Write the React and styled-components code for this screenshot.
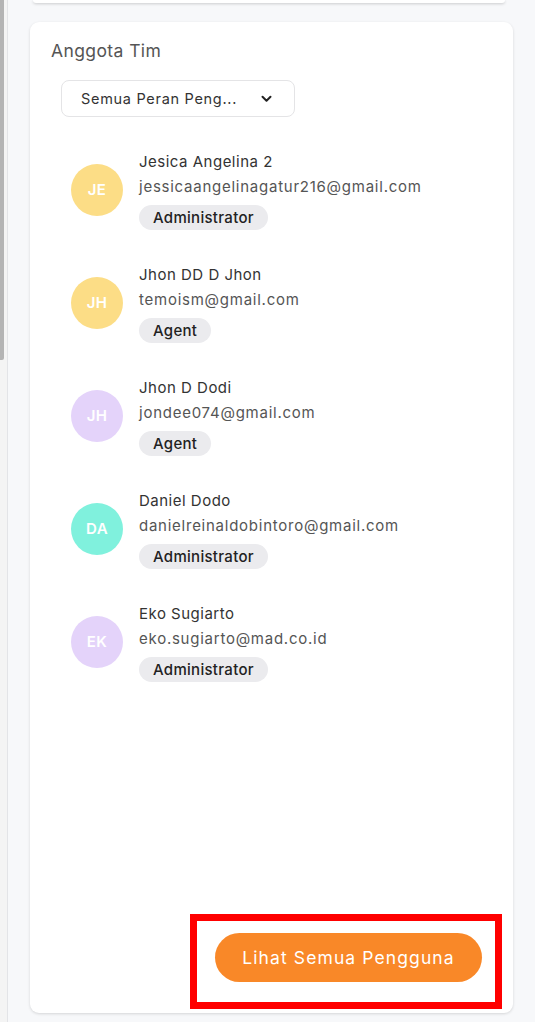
import React from "react";
import styled, { createGlobalStyle } from "styled-components";

const GlobalStyle = createGlobalStyle`
  html, body {
    margin: 0;
    padding: 0;
    background: #f7f8fa;
    font-family: "Inter", "Noto Sans", sans-serif;
  }
`;

const Page = styled.div`
  display: flex;
  height: 1022px;
  overflow: hidden;
`;

// left strip with scrollbar thumb and divider
const Gutter = styled.div`
  width: 7px;
  flex-shrink: 0;
  background: #f4f4f4;
  border-right: 1px solid #e3e4e7;
  display: flex;
  flex-direction: column;
`;

const Thumb = styled.div`
  width: 4px;
  height: 360px;
  background: #b4b4b4;
  border-radius: 0 0 2px 0;
`;

const Column = styled.div`
  flex: 1;
  display: flex;
  flex-direction: column;
  padding: 0 22px 0 22px;
  gap: 19px;
`;

const TopCard = styled.div`
  height: 3px;
  margin: 0 8px 0 3px;
  background: #fff;
  border-radius: 0 0 8px 8px;
  box-shadow: 0 1px 3px rgba(0, 0, 0, 0.18);
`;

const Card = styled.div`
  position: relative;
  height: 991px;
  box-sizing: border-box;
  background: #fff;
  border-radius: 9px;
  box-shadow: 0 1px 3px rgba(0, 0, 0, 0.14);
  padding: 18px 31px 31px 21px;
  display: flex;
  flex-direction: column;
`;

const Title = styled.div`
  font-size: 17.5px;
  color: #555;
  line-height: 22px;
  letter-spacing: 0.4px;
`;

const Select = styled.div`
  margin: 18px 0 0 10px;
  width: 234px;
  height: 37px;
  box-sizing: border-box;
  border: 1px solid #e4e4e6;
  border-radius: 8px;
  display: flex;
  align-items: center;
  justify-content: space-between;
  padding: 0 22px 0 19px;
  font-size: 14.5px;
  color: #333;
  letter-spacing: 0.7px;
`;

const List = styled.div`
  margin: 32px 0 0 20px;
  display: flex;
  flex-direction: column;
  gap: 32px;
`;

const Row = styled.div`
  display: flex;
  align-items: center;
  gap: 16px;
`;

const Avatar = styled.div`
  width: 52px;
  height: 52px;
  border-radius: 50%;
  background: ${({ $color }) => $color};
  color: #fff;
  font-weight: 600;
  font-size: 15px;
  letter-spacing: 0.4px;
  display: flex;
  align-items: center;
  justify-content: center;
  flex-shrink: 0;
`;

const Info = styled.div`
  display: flex;
  flex-direction: column;
  align-items: flex-start;
`;

const Name = styled.div`
  font-size: 15px;
  color: #333;
  line-height: 25px;
  letter-spacing: 0.5px;
`;

const Email = styled.div`
  font-size: 15px;
  color: #555;
  line-height: 25px;
  letter-spacing: 0.75px;
`;

const Badge = styled.div`
  margin-top: 6px;
  height: 25px;
  display: flex;
  align-items: center;
  padding: 0 14px;
  border-radius: 13px;
  background: #ebebee;
  font-size: 15px;
  font-weight: 500;
  letter-spacing: 0.3px;
  color: #222;
`;

const Footer = styled.div`
  margin-top: auto;
  display: flex;
  justify-content: flex-end;
`;

const Button = styled.button`
  width: 267px;
  height: 49px;
  border: none;
  border-radius: 25px;
  background: #f98828;
  color: #fff;
  font-family: inherit;
  font-size: 17.5px;
  font-weight: 400;
  letter-spacing: 1.1px;
  cursor: pointer;
`;

// annotation frame drawn over the button
const Highlight = styled.div`
  position: absolute;
  left: 160px;
  top: 892px;
  width: 312px;
  height: 95px;
  box-sizing: border-box;
  border: 7px solid #ff0000;
  pointer-events: none;
`;

const members = [
  { initials: "JE", name: "Jesica Angelina 2", email: "jessicaangelinagatur216@gmail.com", role: "Administrator", color: "#fcdd86" },
  { initials: "JH", name: "Jhon DD D Jhon", email: "temoism@gmail.com", role: "Agent", color: "#fcdd86" },
  { initials: "JH", name: "Jhon D Dodi", email: "jondee074@gmail.com", role: "Agent", color: "#e4d3fa" },
  { initials: "DA", name: "Daniel Dodo", email: "danielreinaldobintoro@gmail.com", role: "Administrator", color: "#80f1dd" },
  { initials: "EK", name: "Eko Sugiarto", email: "eko.sugiarto@mad.co.id", role: "Administrator", color: "#e4d3fa" },
];

const Chevron = () => (
  <svg width="11" height="8" viewBox="0 0 11 8">
    <path d="M1.5 1.8 L5.5 5.8 L9.5 1.8" fill="none" stroke="#222" strokeWidth="2" strokeLinecap="round" strokeLinejoin="round" />
  </svg>
);

export default function App() {
  return (
    <>
      <GlobalStyle />
      <Page>
        <Gutter>
          <Thumb />
        </Gutter>
        <Column>
          <TopCard />
          <Card>
            <Title>Anggota Tim</Title>
            <Select>
              <span>Semua Peran Peng...</span>
              <Chevron />
            </Select>
            <List>
              {members.map((m) => (
                <Row key={m.email}>
                  <Avatar $color={m.color}>{m.initials}</Avatar>
                  <Info>
                    <Name>{m.name}</Name>
                    <Email>{m.email}</Email>
                    <Badge>{m.role}</Badge>
                  </Info>
                </Row>
              ))}
            </List>
            <Footer>
              <Button>Lihat Semua Pengguna</Button>
            </Footer>
            <Highlight />
          </Card>
        </Column>
      </Page>
    </>
  );
}
